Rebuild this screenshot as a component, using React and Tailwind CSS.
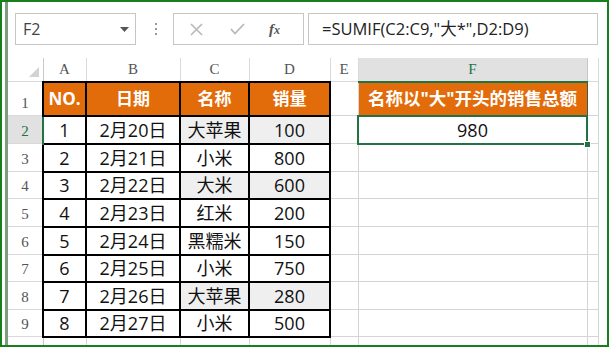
const FONT = "font-['Open_Sans','Noto_Sans_CJK_SC',sans-serif]";
const HDR = "font-['Liberation_Serif','Noto_Serif',serif]";

const cols = [
  { key: 'A', w: 43 },
  { key: 'B', w: 94 },
  { key: 'C', w: 69 },
  { key: 'D', w: 81 },
  { key: 'E', w: 28 },
  { key: 'F', w: 229 },
  { key: 'G', w: 11 },
];

const rows = [
  { no: 1, date: '2月20日', name: '大苹果', qty: 100, hl: true },
  { no: 2, date: '2月21日', name: '小米', qty: 800 },
  { no: 3, date: '2月22日', name: '大米', qty: 600, hl: true },
  { no: 4, date: '2月23日', name: '红米', qty: 200 },
  { no: 5, date: '2月24日', name: '黑糯米', qty: 150 },
  { no: 6, date: '2月25日', name: '小米', qty: 750 },
  { no: 7, date: '2月26日', name: '大苹果', qty: 280, hl: true },
  { no: 8, date: '2月27日', name: '小米', qty: 500 },
];

const rowHeights = [28, 28, 27, 28, 28, 27, 28, 27];

const grid = 'border border-[#d4d4d4]';
const box = 'border-2 border-black';
const data = `${FONT} text-[18px] leading-none text-center text-[#111]`;

function RowHead({ n, active }) {
  return (
    <td
      className={`${HDR} text-[15px] text-center align-bottom pb-[1px] border-b border-b-[#d9d9d9] ${
        active
          ? 'bg-[#e1e1e1] text-[#217346] border-r-2 border-r-[#217346]'
          : 'bg-white text-[#555] border-r border-r-[#c8c8c8]'
      }`}
    >
      {n}
    </td>
  );
}

export default function App() {
  return (
    <div className="w-[611px] h-[347px] bg-white">
      <div className="w-[609px] h-[347px] border-2 border-[#17801c] flex overflow-hidden">
        <div className="w-[3px] shrink-0 bg-white" />
        <div className="w-[3px] shrink-0 bg-[#7d9c7d]" />
        <div className="flex-1 flex flex-col">
          {/* toolbar */}
          <div className="h-[56px] shrink-0 flex items-center pl-[7px] pb-[2px] bg-white">
            <div className="w-[121px] h-[32px] border border-[#c6c6c6] flex items-center justify-between pl-[7px] pr-[6px]">
              <span className="font-['Open_Sans',sans-serif] text-[16px] text-[#444]">F2</span>
              <svg width="9" height="5" viewBox="0 0 9 5">
                <path d="M0 0 L9 0 L4.5 5 Z" fill="#555" />
              </svg>
            </div>
            <div className="w-[37px] flex flex-col items-center gap-[3px] pl-[2px]">
              <span className="w-[2px] h-[2px] bg-[#999]" />
              <span className="w-[2px] h-[2px] bg-[#999]" />
              <span className="w-[2px] h-[2px] bg-[#999]" />
            </div>
            <div className="w-[131px] h-[32px] border border-[#c6c6c6] flex items-center">
              <svg className="ml-[16px]" width="13" height="13" viewBox="0 0 13 13">
                <path d="M1 1 L12 12 M12 1 L1 12" stroke="#b8b8b8" strokeWidth="1.6" />
              </svg>
              <svg className="ml-[27px]" width="15" height="12" viewBox="0 0 15 12">
                <path d="M1 6 L5 10.5 L14 1" stroke="#b8b8b8" strokeWidth="1.8" fill="none" />
              </svg>
              <span className="ml-[24px] font-['Liberation_Serif',serif] italic font-bold text-[15px] text-[#555] leading-none">
                f<span className="text-[12px]">x</span>
              </span>
            </div>
            <div className="ml-[4px] w-[290px] h-[32px] border border-[#c6c6c6] flex items-center pl-[13px]">
              <span className={`${FONT} text-[16.5px] text-[#222]`}>=SUMIF(C2:C9,"大*",D2:D9)</span>
            </div>
          </div>

          {/* sheet */}
          <table className="table-fixed border-collapse w-[590px]">
            <colgroup>
              <col className="w-[35px]" />
              {cols.map((c) => (
                <col key={c.key} style={{ width: c.w }} />
              ))}
            </colgroup>
            <tbody>
              <tr className="h-[22px]">
                <td className="relative bg-white border-r border-r-[#c8c8c8] border-b border-b-[#d9d9d9]">
                  <svg className="absolute right-[4px] bottom-[4px]" width="10" height="10" viewBox="0 0 10 10">
                    <path d="M10 0 L10 10 L0 10 Z" fill="#d3d3d3" />
                  </svg>
                </td>
                {cols.map((c) => (
                  <td
                    key={c.key}
                    className={`${HDR} text-[15px] text-center align-middle ${
                      c.key === 'F'
                        ? 'bg-[#e1e1e1] text-[#217346] border-b-2 border-b-[#217346] border-x border-x-[#c8c8c8]'
                        : 'bg-white text-[#555] border-x border-x-[#dadada] border-b border-b-[#d9d9d9]'
                    }`}
                  >
                    {c.key === 'G' ? '' : c.key}
                  </td>
                ))}
              </tr>

              <tr className="h-[34px]">
                <RowHead n={1} />
                {['NO.', '日期', '名称', '销量'].map((t) => (
                  <td
                    key={t}
                    className={`${box} ${FONT} bg-[#e26b0a] text-white font-bold text-[17px] text-center align-middle`}
                  >
                    {t}
                  </td>
                ))}
                <td className={grid} />
                <td
                  className={`border border-[#3d5a45] ${FONT} bg-[#e26b0a] text-white font-bold text-[17.5px] text-center align-middle whitespace-nowrap`}
                >
                  名称以"大"开头的销售总额
                </td>
                <td className={grid} />
              </tr>

              {rows.map((r, i) => (
                <tr key={r.no} style={{ height: rowHeights[i] }}>
                  <RowHead n={i + 2} active={i === 0} />
                  <td className={`${box} ${data}`}>{r.no}</td>
                  <td className={`${box} ${data}`}>{r.date}</td>
                  <td className={`${box} ${data} ${r.hl ? 'bg-[#efefef]' : ''}`}>{r.name}</td>
                  <td className={`${box} ${data} ${r.hl ? 'bg-[#efefef]' : ''}`}>{r.qty}</td>
                  <td className={grid} />
                  {i === 0 ? (
                    <td className={`relative border-2 border-[#217346] ${data}`}>
                      980
                      <span className="absolute -right-[5px] -bottom-[5px] w-[7px] h-[7px] bg-[#217346] border border-white" />
                    </td>
                  ) : (
                    <td className={grid} />
                  )}
                  <td className={grid} />
                </tr>
              ))}

              <tr className="h-[8px]">
                <td className="bg-white border-r border-r-[#c8c8c8]" />
                {cols.map((c) => (
                  <td key={c.key} className="border-x border-[#d4d4d4]" />
                ))}
              </tr>
            </tbody>
          </table>
        </div>
      </div>
    </div>
  );
}
